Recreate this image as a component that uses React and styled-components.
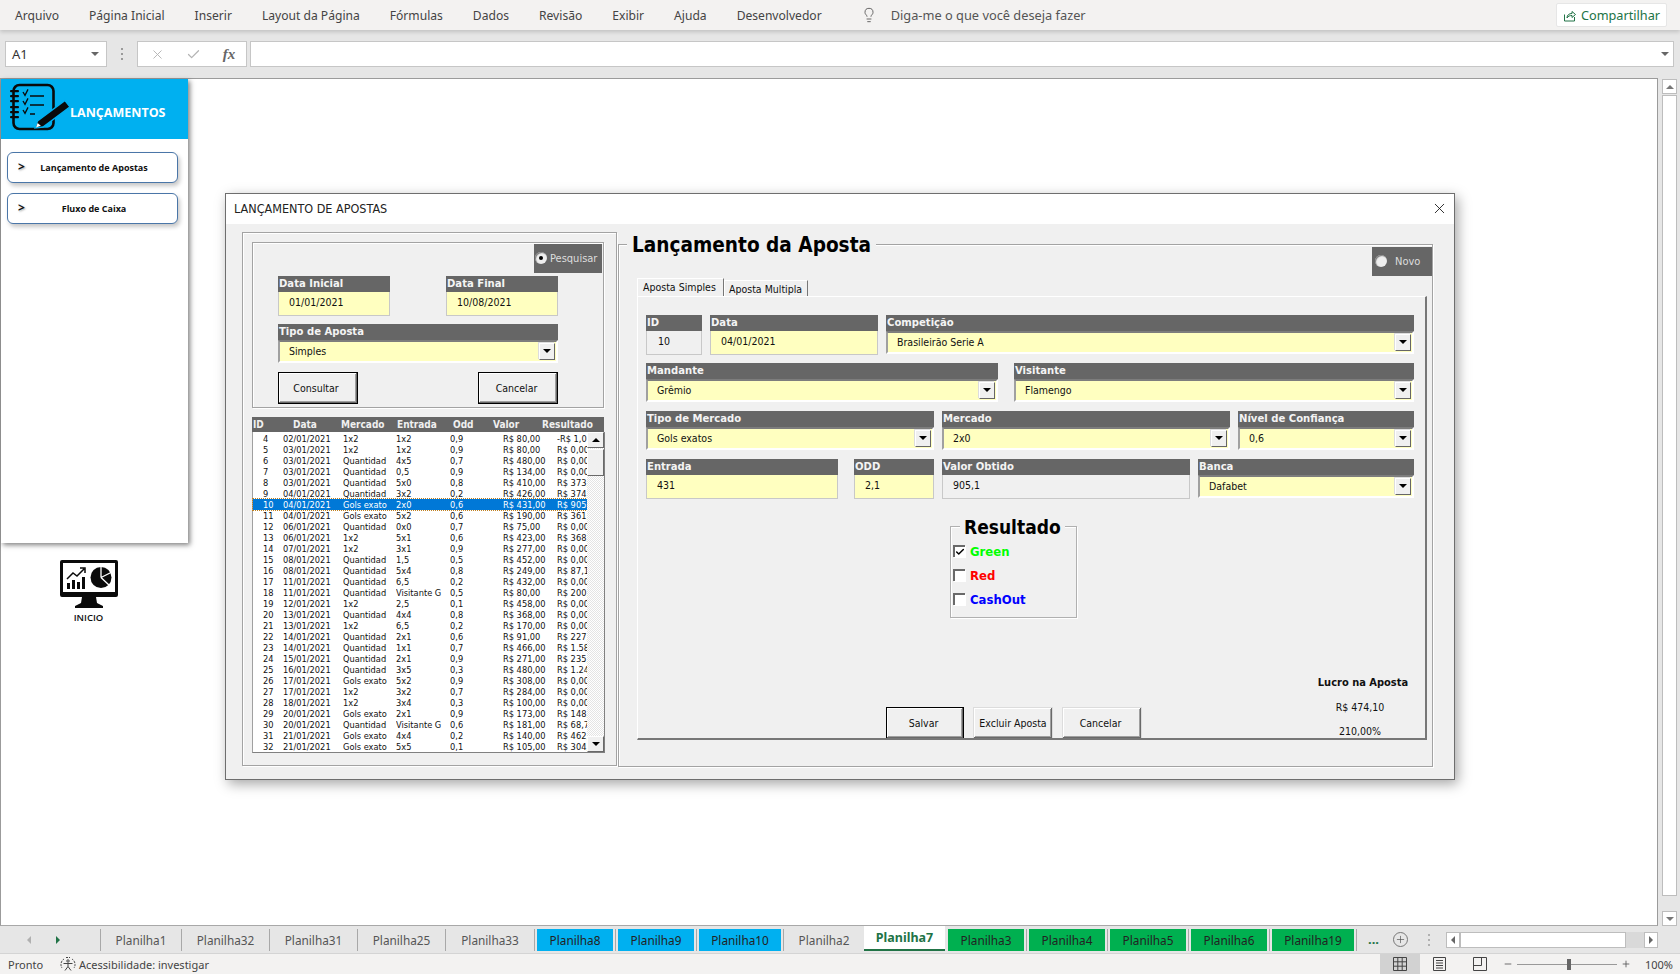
import React from 'react'
import styled, { createGlobalStyle } from 'styled-components'
import { X, Check, Lightbulb, Plus, Minus } from 'lucide-react'

const office = `"Noto Sans", "Open Sans", "Liberation Sans", sans-serif`
const tahoma = `"DejaVu Sans Condensed", "DejaVu Sans", "Liberation Sans", sans-serif`

const GlobalStyle = createGlobalStyle`
    html, body {
        margin: 0;
        padding: 0;
        width: 1680px;
        height: 974px;
        overflow: hidden;
        background: #fff;
    }
    * { box-sizing: border-box; }
`

const Page = styled.div`
    width: 1680px;
    height: 974px;
    display: flex;
    flex-direction: column;
    font-family: ${office};
`

// ---------- ribbon ----------
const Ribbon = styled.div`
    height: 30px;
    flex: none;
    display: flex;
    align-items: center;
    padding-left: 0;
    background: #f3f2f1;
    box-shadow: 0 2px 4px rgba(0, 0, 0, .16);
    position: relative;
    z-index: 2;
`
const MenuItem = styled.div`
    padding: 0 15px;
    font-size: 12.1px;
    color: #444;
    white-space: nowrap;
`
const Search = styled.div`
    display: flex;
    align-items: center;
    gap: 14px;
    margin-left: 24px;
    font-size: 12.8px;
    color: #555;
    white-space: nowrap;
`
const ShareButton = styled.div`
    margin-left: auto;
    margin-right: 13px;
    width: 111px;
    height: 24px;
    display: flex;
    align-items: center;
    justify-content: center;
    gap: 5px;
    background: #fff;
    border: 1px solid #e6e6e6;
    border-radius: 2px;
    color: #217346;
    font-size: 12.7px;
`

// ---------- formula bar ----------
const FormulaBar = styled.div`
    height: 48px;
    flex: none;
    display: flex;
    gap: 3px;
    padding: 11px 6px 11px 5px;
    background: #e6e6e6;
`
const NameBox = styled.div`
    width: 102px;
    display: flex;
    align-items: center;
    justify-content: space-between;
    padding: 0 6px;
    background: #fff;
    border: 1px solid #c6c6c6;
    font-size: 13px;
    color: #333;
`
const CaretDown = styled.span`
    width: 0;
    height: 0;
    margin-right: 1px;
    border-left: 4px solid transparent;
    border-right: 4px solid transparent;
    border-top: 4px solid #666;
`
const Grip = styled.div`
    width: 24px;
    display: flex;
    flex-direction: column;
    align-items: center;
    justify-content: center;
    gap: 3px;
    span { width: 2px; height: 2px; background: #9a9a9a; }
`
const FormulaButtons = styled.div`
    width: 110px;
    display: flex;
    align-items: center;
    justify-content: space-around;
    padding: 0 0 0 1px;
    background: #fff;
    border: 1px solid #c6c6c6;
    color: #b4b4b4;
`
const Fx = styled.span`
    font-family: "Liberation Serif", serif;
    font-style: italic;
    font-size: 15px;
    font-weight: bold;
    color: #666;
`
const FormulaInput = styled.div`
    flex: 1;
    display: flex;
    align-items: center;
    justify-content: flex-end;
    padding-right: 3px;
    background: #fff;
    border: 1px solid #c6c6c6;
    color: #777;
`

// ---------- work area ----------
const WorkArea = styled.div`
    flex: 1;
    min-height: 0;
    display: flex;
    gap: 4px;
    background: #e6e6e6;
    padding-right: 3px;
`
const Sheet = styled.div`
    position: relative;
    flex: 1;
    background: #fff;
    border: 1px solid #9b9b9b;
    border-bottom-color: #a8a8a8;
    padding-left: 0;
`
const Sidebar = styled.div`
    width: 187px;
    height: 464px;
    background: #fff;
    box-shadow: 2px 2px 5px rgba(0, 0, 0, .5);
`
const SidebarHead = styled.div`
    height: 60px;
    display: flex;
    align-items: center;
    padding-left: 6px;
    background: #00b0f0;
`
const SidebarTitle = styled.div`
    margin: 7px 0 0 1px;
    font-family: "Open Sans", sans-serif;
    font-size: 12.5px;
    font-weight: 700;
    color: #fff;
`
const SideNav = styled.div`
    display: flex;
    flex-direction: column;
    gap: 10px;
    padding: 13px 10px 0 6px;
`
const SideButton = styled.div`
    position: relative;
    height: 31px;
    display: flex;
    align-items: center;
    justify-content: center;
    padding-left: 3px;
    background: #fff;
    border: 1.5px solid #4a76a8;
    border-radius: 6px;
    box-shadow: 2px 3px 4px rgba(0, 0, 0, .22);
    font-family: "Open Sans", sans-serif;
    font-size: 9px;
    font-weight: 700;
    color: #111;
`
const Chevron = styled.span`
    position: absolute;
    left: 10px;
    top: 5px;
    font-size: 12px;
    font-weight: 700;
    text-shadow: 1px 1px 2px rgba(0, 0, 0, .35);
`
const HomeLink = styled.div`
    width: 175px;
    margin-top: 17px;
    display: flex;
    flex-direction: column;
    align-items: center;
    gap: 3px;
    font-family: "Open Sans", sans-serif;
    font-size: 9.5px;
    font-weight: 600;
    color: #111;
`
const VScroll = styled.div`
    width: 15px;
    margin-top: 1px;
    margin-bottom: 0;
    display: flex;
    flex-direction: column;
    gap: 1px;
`
const ScrollArrow = styled.div`
    height: 15px;
    flex: none;
    display: flex;
    align-items: center;
    justify-content: center;
    background: #fff;
    border: 1px solid #bdbdbd;
    margin-top: ${p => p.$push ? 'auto' : 0};
`
const Tri = styled.span`
    width: 0;
    height: 0;
    border-left: ${p => p.$s || 4}px solid transparent;
    border-right: ${p => p.$s || 4}px solid transparent;
    ${p => p.$up
        ? `border-bottom: ${p.$s || 4}px solid ${p.$c || '#777'};`
        : `border-top: ${p.$s || 4}px solid ${p.$c || '#777'};`}
`
const ScrollThumb = styled.div`
    height: 801px;
    background: #fff;
    border: 1px solid #bdbdbd;
`

// ---------- dialog ----------
const Dialog = styled.div`
    position: absolute;
    left: 224px;
    top: 114px;
    width: 1230px;
    height: 587px;
    display: flex;
    flex-direction: column;
    background: #f0f0f0;
    border: 1px solid #6e6e6e;
    box-shadow: 3px 4px 12px rgba(0, 0, 0, .35);
    font-family: ${tahoma};
    color: #111;
`
const TitleBar = styled.div`
    height: 30px;
    flex: none;
    display: flex;
    align-items: center;
    justify-content: space-between;
    padding: 0 6px 2px 8px;
    background: #fff;
    font-size: 12.5px;
    color: #222;
`
const DialogBody = styled.div`
    display: flex;
    padding: 8px 0 0 16px;
`
const Frame = styled.div`
    border: 1px solid #a3a3a3;
    box-shadow: inset 1px 1px 0 #fff, 1px 1px 0 #fff;
`
const SearchFrame = styled(Frame)`
    width: 375px;
    height: 534px;
    padding: 9px 12px 0 9px;
`
const FilterBox = styled(Frame)`
    width: 352px;
    height: 166px;
    display: flex;
    flex-direction: column;
    padding: 1px 1px 0 25px;
`
const Tag = styled.div`
    align-self: flex-end;
    width: ${p => p.$w}px;
    height: 29px;
    margin-top: ${p => p.$mt || 0}px;
    flex: none;
    display: flex;
    align-items: center;
    gap: ${p => p.$gap}px;
    padding-left: ${p => p.$pl}px;
    background: #666;
    color: #ddd;
    font-size: 11px;
`
const Radio = styled.span`
    width: 12px;
    height: 12px;
    flex: none;
    display: flex;
    align-items: center;
    justify-content: center;
    margin-top: -2px;
    border-radius: 50%;
    background: #eee;
    box-shadow: inset 1px 1px 1px #777;
    &::after {
        content: '';
        width: 4px;
        height: 4px;
        border-radius: 50%;
        background: ${p => p.$on ? '#000' : 'transparent'};
    }
`
const FilterRow = styled.div`
    width: 280px;
    display: flex;
    justify-content: space-between;
    margin-top: ${p => p.$mt}px;
    flex: none;
`
const Field = styled.div`
    width: ${p => p.$w}px;
    margin-left: ${p => p.$ml || 0}px;
    flex: none;
`
const FieldHead = styled.div`
    height: 16px;
    padding-left: 1px;
    background: #666;
    color: #f4f4f4;
    font-size: 11.2px;
    font-weight: 700;
    line-height: 15px;
    white-space: nowrap;
    overflow: hidden;
`
const TextBox = styled.div`
    height: ${p => p.$h || 24}px;
    padding: ${p => p.$pt || 2}px 0 0 ${p => p.$pl || 10}px;
    background: ${p => p.$locked ? '#f0f0f0' : '#ffffc0'};
    border: 1px solid #c8c8c8;
    border-top: 0;
    font-size: 10.5px;
    line-height: 16px;
`
const Combo = styled.div`
    height: 23px;
    display: flex;
    align-items: center;
    justify-content: space-between;
    padding: 0 1px 1px 9px;
    background: #ffffc0;
    border-top: 2px solid #7d7d7d;
    border-left: 2px solid #a0a0a0;
    border-right: 2px solid #fff;
    border-bottom: 2px solid #fff;
    font-size: 10.5px;
`
const DropButton = styled.div`
    width: 16px;
    height: 17px;
    flex: none;
    display: flex;
    align-items: center;
    justify-content: center;
    background: #f0f0f0;
    border: 1px solid #fff;
    border-right-color: #666;
    border-bottom-color: #666;
    box-shadow: -1px -1px 0 #ddd;
`
const Button = styled.div`
    width: ${p => p.$w}px;
    height: ${p => p.$h}px;
    display: flex;
    align-items: center;
    justify-content: center;
    padding-right: ${p => p.$pr || 0}px;
    background: #f0f0f0;
    font-size: 10.5px;
    color: #111;
    border: 1px solid ${p => p.$primary ? '#000' : '#dcdcdc'};
    box-shadow: inset -1px -1px 0 #696969, inset 1px 1px 0 #fff, inset -2px -2px 0 #a0a0a0;
`

// ---------- list ----------
const ListHead = styled.div`
    position: relative;
    width: 352px;
    height: 15px;
    margin-top: 9px;
    background: #666;
    color: #f0f0f0;
    font-size: 10px;
    font-weight: 700;
    line-height: 15px;
    span {
        position: absolute;
        top: 0;
    }
`
const ListBox = styled.div`
    width: 353px;
    height: 321px;
    display: flex;
    background: #fff;
    border: 1px solid #808080;
    border-top: 0;
    border-left-color: #a0a0a0;
`
const Rows = styled.div`
    width: 334px;
    padding-top: 1px;
    flex: none;
`
const Row = styled.div`
    height: 11px;
    display: grid;
    grid-template-columns: 30px 60px 53px 54px 53px 54px 30px;
    padding-left: 0;
    font-size: 9.2px;
    line-height: 11px;
    white-space: nowrap;
    background: ${p => p.$selected ? '#0078d7' : 'transparent'};
    color: ${p => p.$selected ? '#fff' : '#111'};
    outline: ${p => p.$selected ? '1px dotted #c08020' : 'none'};
`
const Cell = styled.div`
    overflow: hidden;
    &:nth-child(1) { padding-left: 10px; }
    &:nth-child(3) { padding-right: 9px; }
    &:nth-child(4) { padding-right: 12px; }
`
const ListScroll = styled.div`
    width: 17px;
    display: flex;
    flex-direction: column;
    background: repeating-conic-gradient(#e4e4e4 0 25%, #fff 0 50%) 0 0 / 2px 2px;
`
const ListArrow = styled.div`
    height: 16px;
    flex: none;
    display: flex;
    align-items: center;
    justify-content: center;
    background: #f0f0f0;
    border: 1px solid #fff;
    border-right-color: #696969;
    border-bottom-color: #696969;
    margin-top: ${p => p.$push ? 'auto' : 0};
`
const ListThumb = styled.div`
    height: 27px;
    margin-top: 1px;
    background: #f0f0f0;
    border: 1px solid #fff;
    border-right-color: #696969;
    border-bottom-color: #696969;
`

// ---------- form ----------
const FormFrame = styled(Frame)`
    position: relative;
    width: 815px;
    height: 523px;
    margin: 12px 0 0 1px;
    display: flex;
    flex-direction: column;
    padding-left: 18px;
`
const Legend = styled.div`
    position: absolute;
    left: 8px;
    top: -15px;
    padding: 0 5px;
    background: #f0f0f0;
    font-size: 20.6px;
    font-weight: 700;
    line-height: 30px;
    color: #000;
    white-space: nowrap;
`
const TabStrip = styled.div`
    height: 18px;
    margin-top: 2px;
    display: flex;
    align-items: flex-end;
    flex: none;
`
const FormTab = styled.div`
    height: ${p => p.$active ? 18 : 16}px;
    width: ${p => p.$w}px;
    padding: ${p => p.$active ? '1px 0 0 5px' : '1px 0 0 4px'};
    font-size: 10.5px;
    line-height: 14px;
    border-top: 1px solid #fff;
    border-left: 1px solid #fff;
    border-right: 1px solid #777;
    white-space: nowrap;
`
const TabPage = styled.div`
    width: 790px;
    height: 444px;
    padding: 18px 0 0 8px;
    border: 2px solid #fff;
    border-right-color: #777;
    border-bottom-color: #777;
    border-top-width: 1px;
    border-left-width: 1px;
    overflow: hidden;
`
const FormRow = styled.div`
    width: 768px;
    height: 40px;
    margin-bottom: 8px;
    display: flex;
    gap: ${p => p.$gap || 8}px;
`
const ResultFrame = styled(Frame)`
    position: relative;
    width: 127px;
    height: 92px;
    margin: 27px 0 0 304px;
    padding: 16px 0 0 2px;
    display: flex;
    flex-direction: column;
    gap: 8px;
    border-color: #b0b0b0;
`
const ResultLegend = styled.div`
    position: absolute;
    left: 9px;
    top: -12px;
    padding: 0 4px;
    background: #f0f0f0;
    font-size: 19px;
    font-weight: 700;
    line-height: 25px;
    color: #000;
`
const CheckLine = styled.div`
    height: 16px;
    display: flex;
    align-items: center;
    gap: 5px;
    font-size: 13px;
    font-weight: 700;
    color: ${p => p.$color};
`
const CheckBox = styled.div`
    width: 12px;
    height: 12px;
    display: flex;
    align-items: center;
    justify-content: center;
    background: #fff;
    border-top: 2px solid #696969;
    border-left: 2px solid #696969;
    box-shadow: 1px 1px 0 #fff;
    color: #000;
`
const FormFooter = styled.div`
    width: 768px;
    height: 71px;
    margin-top: 52px;
    display: flex;
`
const FooterButtons = styled.div`
    margin: 37px 0 0 240px;
    display: flex;
    gap: 9px;
`
const Summary = styled.div`
    margin-left: auto;
    margin-right: 4px;
    width: 94px;
    display: flex;
    flex-direction: column;
    align-items: center;
    font-size: 10.5px;
    line-height: 24px;
    div:first-child { font-size: 11px; font-weight: 700; line-height: 25px; }
    div:not(:first-child) { padding-right: 6px; }
`

// ---------- sheet tabs ----------
const TabBar = styled.div`
    height: 28px;
    flex: none;
    display: flex;
    align-items: flex-start;
    padding-top: 3px;
    background: #e6e6e6;
    border-bottom: 1px solid #d4d4d4;
`
const TabNav = styled.div`
    width: 100px;
    height: 22px;
    flex: none;
    display: flex;
    align-items: center;
    gap: 25px;
    padding-left: 27px;
`
const NavTri = styled.span`
    width: 0;
    height: 0;
    border-top: 4px solid transparent;
    border-bottom: 4px solid transparent;
    ${p => p.$left
        ? `border-right: 4px solid ${p.$c || '#b0b0b0'};`
        : `border-left: 4px solid ${p.$c || '#217346'};`}
`
const SheetCell = styled.div`
    position: relative;
    width: ${p => p.$w}px;
    height: 22px;
    flex: none;
    padding: 0 2px 0 2px;
    border-left: 1px solid ${p => p.$bare ? 'transparent' : '#a8a8a8'};
`
const SheetLabel = styled.div`
    height: 22px;
    display: flex;
    align-items: center;
    justify-content: center;
    font-size: 11.8px;
    white-space: nowrap;
    color: ${p => p.$bg ? '#222' : '#555'};
    background: ${p => p.$bg || 'transparent'};
`
const ActiveSheet = styled.div`
    position: relative;
    top: -3px;
    width: 81px;
    height: 25px;
    flex: none;
    display: flex;
    align-items: center;
    justify-content: center;
    background: #fff;
    border-bottom: 2px solid #217346;
    font-size: 12.5px;
    font-weight: 700;
    color: #217346;
`
const TabEnd = styled.div`
    width: 1px;
    height: 22px;
    flex: none;
    background: #a8a8a8;
`
const More = styled.div`
    margin-left: 11px;
    width: 20px;
    height: 22px;
    font-size: 13px;
    font-weight: 700;
    line-height: 20px;
    color: #217346;
`
const AddSheet = styled.div`
    width: 15px;
    height: 15px;
    margin: 3px 0 0 5px;
    display: flex;
    align-items: center;
    justify-content: center;
    border-radius: 50%;
    border: 1px solid #777;
    color: #555;
`
const HGrip = styled(Grip)`
    width: 38px;
    height: 22px;
    padding-left: 4px;
    span { background: #b0b0b0; }
`
const HScroll = styled.div`
    width: 212px;
    height: 16px;
    margin-top: 3px;
    display: flex;
    background: #d9d9d9;
`
const HArrow = styled.div`
    width: 14px;
    display: flex;
    align-items: center;
    justify-content: center;
    background: #fff;
    border: 1px solid #bdbdbd;
    margin-left: ${p => p.$push ? 'auto' : 0};
`
const HThumb = styled.div`
    width: 166px;
    background: #fff;
    border: 1px solid #bdbdbd;
`

// ---------- status bar ----------
const StatusBar = styled.div`
    height: 20px;
    flex: none;
    display: flex;
    align-items: center;
    background: #f3f2f1;
    font-size: 11px;
    color: #444;
`
const StatusText = styled.div`
    margin-left: ${p => p.$ml}px;
    white-space: nowrap;
`
const ViewButton = styled.div`
    width: ${p => p.$w}px;
    height: 20px;
    display: flex;
    align-items: center;
    justify-content: center;
    background: ${p => p.$on ? '#d2d2d2' : 'transparent'};
    margin-left: ${p => p.$ml || 0}px;
    color: #444;
`
const Zoom = styled.div`
    width: 128px;
    margin-left: 3px;
    display: flex;
    align-items: center;
    gap: 4px;
    color: #555;
`
const ZoomTrack = styled.div`
    position: relative;
    flex: 1;
    height: 1px;
    background: #999;
    &::after {
        content: '';
        position: absolute;
        left: 50px;
        top: -5px;
        width: 4px;
        height: 11px;
        background: #666;
    }
`

const LogIcon = () => (
    <svg width="62" height="52" viewBox="0 0 62 52" style={{ flex: 'none' }}>
        <rect x="6.5" y="2" width="40" height="44" rx="6" fill="none" stroke="#0a0a0a" strokeWidth="2.6" />
        {[7, 12, 17, 23, 28, 33].map(y => (
            <rect key={y} x="3" y={y} width="9" height="2.2" rx="1" fill="#0a0a0a" />
        ))}
        {[9, 18, 27].map(y => (
            <path key={y} d={`M16 ${y}l2 3.4 3-6`} fill="none" stroke="#0a0a0a" strokeWidth="1.3" />
        ))}
        <path d="M23 13h14M23 22h14M23 31h5" stroke="#0a0a0a" strokeWidth="1.4" />
        <path d="M28 45l2.5-7L58 17.5l5 6.5-27 20z" fill="#0a0a0a" stroke="#00b0f0" strokeWidth="1.4" />
        <path d="M29 44.5l1.6-4.5 3.2 2.8z" fill="#fff" />
    </svg>
)

const MonitorIcon = () => (
    <svg width="58" height="48" viewBox="0 0 58 48">
        <path d="M2 0h54a2 2 0 0 1 2 2v33a2 2 0 0 1-2 2H36l1 6 6 3v2H15v-2l6-3 1-6H2a2 2 0 0 1-2-2V2a2 2 0 0 1 2-2z" fill="#0a0a0a" />
        <rect x="3" y="3" width="52" height="29" fill="#fff" />
        <path d="M7 29v-6h3v6zM12 29v-9h3v9zM17 29v-7h3v7zM22 29v-12h3v12z" fill="#0a0a0a" />
        <path d="M7 19l6-6 4 3 7-7M20 8l5 0 0 5" fill="none" stroke="#0a0a0a" strokeWidth="1.5" />
        <circle cx="41" cy="17.5" r="10.5" fill="#0a0a0a" />
        <path d="M41 17.5L41 5M41 17.5L52 12M41 17.5L50 26" stroke="#fff" strokeWidth="1.3" fill="none" />
    </svg>
)

const ShareIcon = () => (
    <svg width="13" height="13" viewBox="0 0 13 13" fill="none" stroke="#217346" strokeWidth="1">
        <path d="M1.5 5.5v6.5h10V8" />
        <path d="M4 9c0-3 2-4.5 5-4.5V2.5l3.5 3-3.5 3v-2C7 6.500 5 7 4 9z" />
    </svg>
)

const AccessIcon = () => (
    <svg width="16" height="16" viewBox="0 0 16 16" fill="none" stroke="#444" strokeWidth="1">
        <path d="M4 3a6.500 6.500 0 0 0-2 9M12 3a6.500 6.500 0 0 1 2 9M6 1.500h4" strokeDasharray="2 1" />
        <circle cx="8" cy="5" r="1.200" />
        <path d="M3.500 7.500h9M8 7.500v3M8 10.500l-3 4M8 10.500l3 4" />
    </svg>
)

const GridIcon = () => (
    <svg width="14" height="14" viewBox="0 0 14 14" fill="none" stroke="#444" strokeWidth="1">
        <path d="M.5.500h13v13H.500zM.5 4.800h13M.5 9.200h13M4.800.500v13M9.200.500v13" />
    </svg>
)
const LayoutIcon = () => (
    <svg width="13" height="14" viewBox="0 0 13 14" fill="none" stroke="#444" strokeWidth="1">
        <path d="M.5.500h12v13H.500zM3 3.500h7M3 6h7M3 8.500h7M3 11h7" />
    </svg>
)
const BreakIcon = () => (
    <svg width="14" height="14" viewBox="0 0 14 14" fill="none" stroke="#444" strokeWidth="1">
        <path d="M.5.500h13v13H.500zM.5 8.500h8M8.500.500v8" />
    </svg>
)

const menu = ['Arquivo', 'Página Inicial', 'Inserir', 'Layout da Página', 'Fórmulas', 'Dados', 'Revisão', 'Exibir', 'Ajuda', 'Desenvolvedor']

const betRows = [
    ['4', '02/01/2021', '1x2', '1x2', '0,9', 'R$ 80,00', '-R$ 1,0'],
    ['5', '03/01/2021', '1x2', '1x2', '0,9', 'R$ 80,00', 'R$ 0,00'],
    ['6', '03/01/2021', 'Quantidad', '4x5', '0,7', 'R$ 480,00', 'R$ 0,00'],
    ['7', '03/01/2021', 'Quantidad', '0,5', '0,9', 'R$ 134,00', 'R$ 0,00'],
    ['8', '03/01/2021', 'Quantidad', '5x0', '0,8', 'R$ 410,00', 'R$ 373,'],
    ['9', '04/01/2021', 'Quantidad', '3x2', '0,2', 'R$ 426,00', 'R$ 374,'],
    ['10', '04/01/2021', 'Gols exato', '2x0', '0,6', 'R$ 431,00', 'R$ 905'],
    ['11', '04/01/2021', 'Gols exato', '5x2', '0,6', 'R$ 190,00', 'R$ 361,'],
    ['12', '06/01/2021', 'Quantidad', '0x0', '0,7', 'R$ 75,00', 'R$ 0,00'],
    ['13', '06/01/2021', '1x2', '5x1', '0,6', 'R$ 423,00', 'R$ 368,'],
    ['14', '07/01/2021', '1x2', '3x1', '0,9', 'R$ 277,00', 'R$ 0,00'],
    ['15', '08/01/2021', 'Quantidad', '1,5', '0,5', 'R$ 452,00', 'R$ 0,00'],
    ['16', '08/01/2021', 'Quantidad', '5x4', '0,8', 'R$ 249,00', 'R$ 87,1'],
    ['17', '11/01/2021', 'Quantidad', '6,5', '0,2', 'R$ 432,00', 'R$ 0,00'],
    ['18', '11/01/2021', 'Quantidad', 'Visitante G', '0,5', 'R$ 80,00', 'R$ 200,'],
    ['19', '12/01/2021', '1x2', '2,5', '0,1', 'R$ 458,00', 'R$ 0,00'],
    ['20', '13/01/2021', 'Quantidad', '4x4', '0,8', 'R$ 368,00', 'R$ 0,00'],
    ['21', '13/01/2021', '1x2', '6,5', '0,2', 'R$ 170,00', 'R$ 0,00'],
    ['22', '14/01/2021', 'Quantidad', '2x1', '0,6', 'R$ 91,00', 'R$ 227,'],
    ['23', '14/01/2021', 'Quantidad', '1x1', '0,7', 'R$ 466,00', 'R$ 1.58'],
    ['24', '15/01/2021', 'Quantidad', '2x1', '0,9', 'R$ 271,00', 'R$ 235,'],
    ['25', '16/01/2021', 'Quantidad', '3x5', '0,3', 'R$ 480,00', 'R$ 1.24'],
    ['26', '17/01/2021', 'Gols exato', '5x2', '0,9', 'R$ 308,00', 'R$ 0,00'],
    ['27', '17/01/2021', '1x2', '3x2', '0,7', 'R$ 284,00', 'R$ 0,00'],
    ['28', '18/01/2021', '1x2', '3x4', '0,3', 'R$ 100,00', 'R$ 0,00'],
    ['29', '20/01/2021', 'Gols exato', '2x1', '0,9', 'R$ 173,00', 'R$ 148,'],
    ['30', '20/01/2021', 'Quantidad', 'Visitante G', '0,6', 'R$ 181,00', 'R$ 68,7'],
    ['31', '21/01/2021', 'Gols exato', '4x4', '0,2', 'R$ 140,00', 'R$ 462,'],
    ['32', '21/01/2021', 'Gols exato', '5x5', '0,1', 'R$ 105,00', 'R$ 304,'],
]

const listHeads = [['ID', 1], ['Data', 41], ['Mercado', 89], ['Entrada', 145], ['Odd', 201], ['Valor', 241], ['Resultado', 290]]

const BLUE = '#00b0f0'
const GREEN = '#00b050'
const sheetsBefore = [
    ['Planilha1', 81], ['Planilha32', 88], ['Planilha31', 88], ['Planilha25', 88], ['Planilha33', 89],
    ['Planilha8', 81, BLUE], ['Planilha9', 81, BLUE], ['Planilha10', 87, BLUE], ['Planilha2', 81],
]
const sheetsAfter = [
    ['Planilha3', 81, GREEN], ['Planilha4', 81, GREEN], ['Planilha5', 81, GREEN], ['Planilha6', 81, GREEN], ['Planilha19', 87, GREEN],
]

const ComboField = ({ w, label, value }) => (
    <Field $w={w}>
        <FieldHead>{label}</FieldHead>
        <Combo>
            {value}
            <DropButton><Tri $c="#000" /></DropButton>
        </Combo>
    </Field>
)

const TextField = ({ w, ml, label, value, locked, h, pl }) => (
    <Field $w={w} $ml={ml}>
        <FieldHead>{label}</FieldHead>
        <TextBox $locked={locked} $h={h} $pl={pl}>{value}</TextBox>
    </Field>
)

export default function App() {
    return (
        <Page>
            <GlobalStyle />
            <Ribbon>
                {menu.map(item => <MenuItem key={item}>{item}</MenuItem>)}
                <Search>
                    <Lightbulb size={16} strokeWidth={1.2} color="#444" />
                    Diga-me o que você deseja fazer
                </Search>
                <ShareButton><ShareIcon />Compartilhar</ShareButton>
            </Ribbon>

            <FormulaBar>
                <NameBox>A1<CaretDown /></NameBox>
                <Grip><span /><span /><span /></Grip>
                <FormulaButtons>
                    <X size={15} strokeWidth={1.5} />
                    <Check size={15} strokeWidth={2} />
                    <Fx>fx</Fx>
                </FormulaButtons>
                <FormulaInput><CaretDown /></FormulaInput>
            </FormulaBar>

            <WorkArea>
                <Sheet>
                    <Sidebar>
                        <SidebarHead>
                            <LogIcon />
                            <SidebarTitle>LANÇAMENTOS</SidebarTitle>
                        </SidebarHead>
                        <SideNav>
                            <SideButton><Chevron>&gt;</Chevron>Lançamento de Apostas</SideButton>
                            <SideButton><Chevron>&gt;</Chevron>Fluxo de Caixa</SideButton>
                        </SideNav>
                    </Sidebar>
                    <HomeLink>
                        <MonitorIcon />
                        INICIO
                    </HomeLink>

                    <Dialog>
                        <TitleBar>
                            LANÇAMENTO DE APOSTAS
                            <X size={17} strokeWidth={1.2} color="#111" />
                        </TitleBar>
                        <DialogBody>
                            <SearchFrame>
                                <FilterBox>
                                    <Tag $w={68} $gap={3} $pl={1}><Radio $on />Pesquisar</Tag>
                                    <FilterRow $mt={3}>
                                        <TextField w={112} label="Data Inicial" value="01/01/2021" />
                                        <TextField w={112} label="Data Final" value="10/08/2021" />
                                    </FilterRow>
                                    <FilterRow $mt={8}>
                                        <ComboField w={280} label="Tipo de Aposta" value="Simples" />
                                    </FilterRow>
                                    <FilterRow $mt={9}>
                                        <Button $primary $pr={4} $w={80} $h={32}>Consultar</Button>
                                        <Button $primary $pr={3} $w={80} $h={32}>Cancelar</Button>
                                    </FilterRow>
                                </FilterBox>
                                <ListHead>
                                    {listHeads.map(([label, left]) => (
                                        <span key={label} style={{ left }}>{label}</span>
                                    ))}
                                </ListHead>
                                <ListBox>
                                    <Rows>
                                        {betRows.map(row => (
                                            <Row key={row[0]} $selected={row[0] === '10'}>
                                                {row.map((value, i) => <Cell key={i}>{value}</Cell>)}
                                            </Row>
                                        ))}
                                    </Rows>
                                    <ListScroll>
                                        <ListArrow><Tri $up $c="#000" /></ListArrow>
                                        <ListThumb />
                                        <ListArrow $push><Tri $c="#000" /></ListArrow>
                                    </ListScroll>
                                </ListBox>
                            </SearchFrame>

                            <FormFrame>
                                <Legend>Lançamento da Aposta</Legend>
                                <Tag $w={60} $mt={2} $gap={8} $pl={3}><Radio />Novo</Tag>
                                <TabStrip>
                                    <FormTab $active $w={87}>Aposta Simples</FormTab>
                                    <FormTab $w={84}>Aposta Multipla</FormTab>
                                </TabStrip>
                                <TabPage>
                                    <FormRow>
                                        <TextField w={56} label="ID" value="10" locked pl={11} />
                                        <TextField w={168} label="Data" value="04/01/2021" />
                                        <ComboField w={528} label="Competição" value="Brasileirão Serie A" />
                                    </FormRow>
                                    <FormRow $gap={16}>
                                        <ComboField w={352} label="Mandante" value="Grêmio" />
                                        <ComboField w={400} label="Visitante" value="Flamengo" />
                                    </FormRow>
                                    <FormRow>
                                        <ComboField w={288} label="Tipo de Mercado" value="Gols exatos" />
                                        <ComboField w={288} label="Mercado" value="2x0" />
                                        <ComboField w={176} label="Nível de Confiança" value="0,6" />
                                    </FormRow>
                                    <FormRow>
                                        <TextField w={192} label="Entrada" value="431" h={24} />
                                        <TextField w={80} ml={8} label="ODD" value="2,1" h={24} />
                                        <TextField w={248} label="Valor Obtido" value="905,1" locked h={24} />
                                        <ComboField w={216} label="Banca" value="Dafabet" />
                                    </FormRow>
                                    <ResultFrame>
                                        <ResultLegend>Resultado</ResultLegend>
                                        <CheckLine $color="#00ff00">
                                            <CheckBox><Check size={10} strokeWidth={3.5} /></CheckBox>
                                            Green
                                        </CheckLine>
                                        <CheckLine $color="#ff0000"><CheckBox />Red</CheckLine>
                                        <CheckLine $color="#0000ff"><CheckBox />CashOut</CheckLine>
                                    </ResultFrame>
                                    <FormFooter>
                                        <FooterButtons>
                                            <Button $primary $pr={3} $w={78} $h={32}>Salvar</Button>
                                            <Button $w={80} $h={32}>Excluir Aposta</Button>
                                            <Button $pr={3} $w={80} $h={32}>Cancelar</Button>
                                        </FooterButtons>
                                        <Summary>
                                            <div>Lucro na Aposta</div>
                                            <div>R$ 474,10</div>
                                            <div>210,00%</div>
                                        </Summary>
                                    </FormFooter>
                                </TabPage>
                            </FormFrame>
                        </DialogBody>
                    </Dialog>
                </Sheet>
                <VScroll>
                    <ScrollArrow><Tri $up /></ScrollArrow>
                    <ScrollThumb />
                    <ScrollArrow $push><Tri /></ScrollArrow>
                </VScroll>
            </WorkArea>

            <TabBar>
                <TabNav><NavTri $left /><NavTri /></TabNav>
                {sheetsBefore.map(([name, w, bg]) => (
                    <SheetCell key={name} $w={w}><SheetLabel $bg={bg}>{name}</SheetLabel></SheetCell>
                ))}
                <ActiveSheet>Planilha7</ActiveSheet>
                {sheetsAfter.map(([name, w, bg], i) => (
                    <SheetCell key={name} $w={w} $bare={i === 0}><SheetLabel $bg={bg}>{name}</SheetLabel></SheetCell>
                ))}
                <TabEnd />
                <More>...</More>
                <AddSheet><Plus size={11} strokeWidth={1.5} /></AddSheet>
                <HGrip><span /><span /><span /></HGrip>
                <HScroll>
                    <HArrow><NavTri $left $c="#666" /></HArrow>
                    <HThumb />
                    <HArrow $push><NavTri $c="#666" /></HArrow>
                </HScroll>
            </TabBar>

            <StatusBar>
                <StatusText $ml={8}>Pronto</StatusText>
                <ViewButton $w={16} $ml={17}><AccessIcon /></ViewButton>
                <StatusText $ml={3}>Acessibilidade: investigar</StatusText>
                <ViewButton $on $w={40} $ml={1171}><GridIcon /></ViewButton>
                <ViewButton $w={40}><LayoutIcon /></ViewButton>
                <ViewButton $w={40}><BreakIcon /></ViewButton>
                <Zoom>
                    <Minus size={10} />
                    <ZoomTrack />
                    <Plus size={10} />
                </Zoom>
                <StatusText $ml={14}>100%</StatusText>
            </StatusBar>
        </Page>
    )
}
